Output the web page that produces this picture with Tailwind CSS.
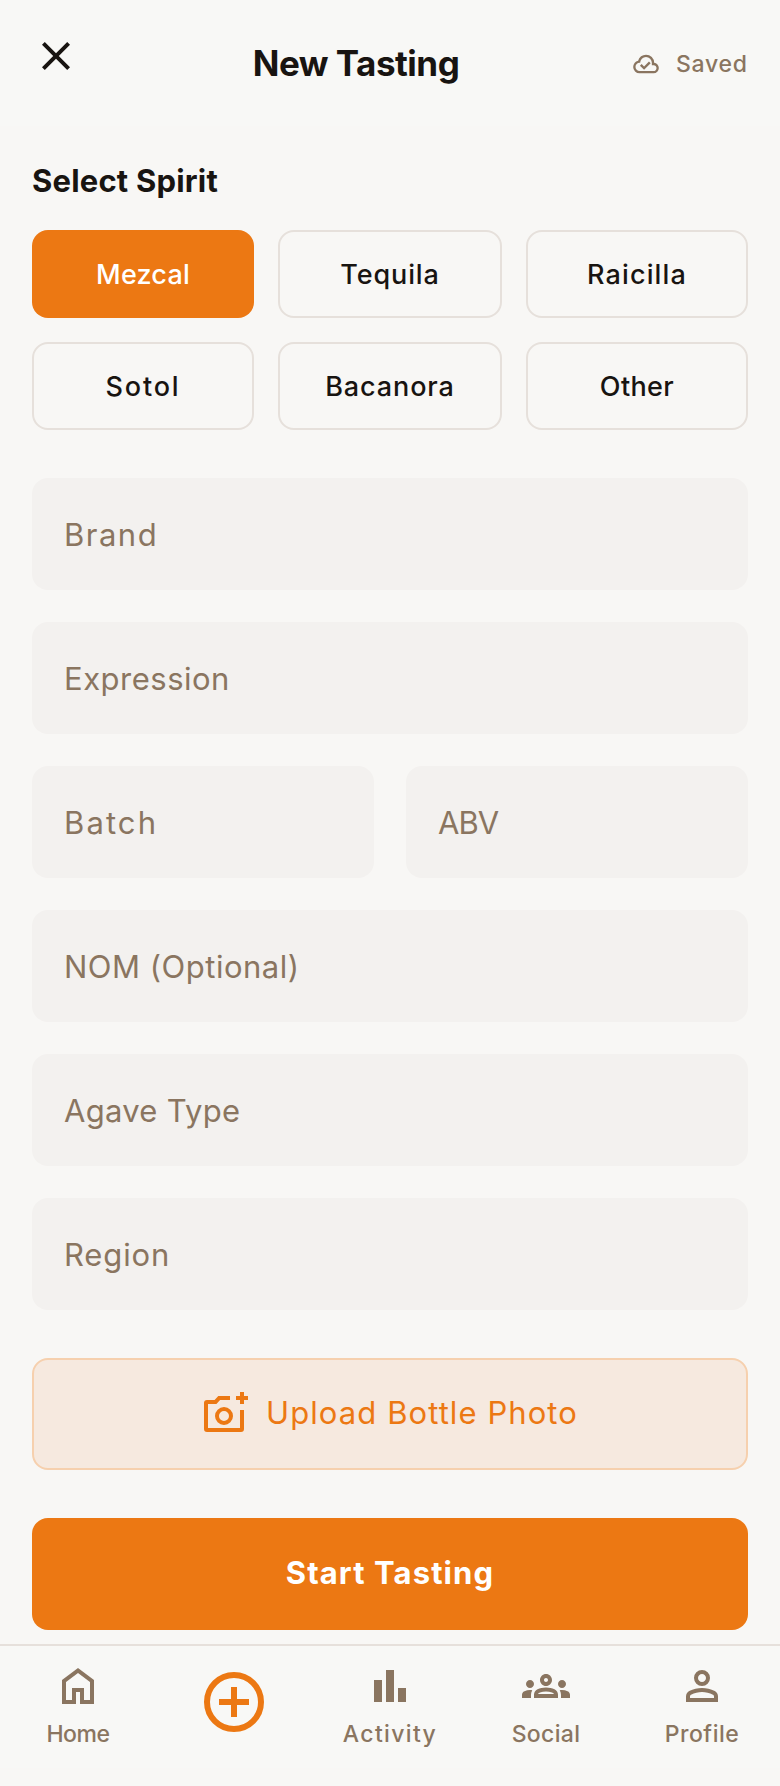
<!DOCTYPE html>
<html lang="en">
<head>
<meta charset="utf-8">
<meta name="viewport" content="width=device-width, initial-scale=1">
<title>New Tasting</title>
<script src="https://cdn.jsdelivr.net/npm/@tailwindcss/browser@4"></script>
</head>
<body class="bg-[#f8f7f5] text-[#181411] font-['Inter','Liberation_Sans',sans-serif]">
<div class="flex h-[1786px] w-[780px] flex-col overflow-hidden">

  <header class="flex h-[126px] shrink-0 items-start bg-[#f8f8f6] px-8 pt-8">
    <button class="size-12 shrink-0" aria-label="Close">
      <svg class="size-12" viewBox="0 0 24 24" fill="currentColor"><path d="M6.4 19 5 17.6l5.6-5.6L5 6.4 6.4 5l5.6 5.6L17.6 5 19 6.4 13.4 12l5.6 5.6-1.4 1.4-5.6-5.6Z"/></svg>
    </button>
    <h1 class="h-16 flex-1 text-center text-[35px] leading-[62px] font-bold tracking-[-0.5px] whitespace-nowrap">New Tasting</h1>
    <div class="flex h-16 w-[116px] shrink-0 items-center gap-4 text-[#8a7560]">
      <svg class="size-7 shrink-0" viewBox="0 0 24 24" fill="currentColor"><path d="m10.35 17 5.65-5.65-1.45-1.45-4.2 4.25-2.1-2.1L6.8 13.45ZM6.5 20q-2.275 0-3.8875-1.575T1 14.575q0-1.95 1.175-3.475T5.25 9.15Q5.875 6.85 7.75 5.425T12 4q2.925 0 4.9625 2.0375T19 11q1.725.2 2.8625 1.4875T23 15.5q0 1.875-1.3125 3.1875T18.5 20Zm0-2h12q1.05 0 1.775-.725T21 15.5t-.725-1.775T18.5 13H17v-2q0-2.075-1.4625-3.5375T12 6 8.4625 7.4625 7 11h-.5q-1.45 0-2.475 1.025T3 14.5t1.025 2.475T6.5 18Z"/></svg>
      <span class="text-[23px] font-medium tracking-[0.75px]">Saved</span>
    </div>
  </header>

  <main class="flex h-[1518px] shrink-0 flex-col px-8 pt-[33px]">
    <h2 class="h-[71px] text-[31px] leading-[44px] font-bold tracking-[0.2px]">Select Spirit</h2>

    <div class="grid grid-cols-[222px_224px_222px] gap-6">
      <button class="h-[88px] rounded-2xl bg-[#ec7813] pt-0.5 text-[27px] font-medium tracking-[0.2px] text-white">Mezcal</button>
      <button class="h-[88px] rounded-2xl border-2 border-[#e6e0db] pt-0.5 text-[27px] font-medium tracking-[0.9px]">Tequila</button>
      <button class="h-[88px] rounded-2xl border-2 border-[#e6e0db] pt-0.5 text-[27px] font-medium tracking-[1.15px]">Raicilla</button>
      <button class="h-[88px] rounded-2xl border-2 border-[#e6e0db] pt-0.5 text-[27px] font-medium tracking-[1.8px]">Sotol</button>
      <button class="h-[88px] rounded-2xl border-2 border-[#e6e0db] pt-0.5 text-[27px] font-medium tracking-[0.9px]">Bacanora</button>
      <button class="h-[88px] rounded-2xl border-2 border-[#e6e0db] pt-0.5 text-[27px] font-medium tracking-[0.37px]">Other</button>
    </div>

    <div class="mt-12 grid grid-cols-2 gap-8 text-[31px] text-[#8a7560]">
      <div class="col-span-2 flex h-28 items-center rounded-2xl bg-[#f3f1ef] px-8 pt-[3px] tracking-[1.5px]">Brand</div>
      <div class="col-span-2 flex h-28 items-center rounded-2xl bg-[#f3f1ef] px-8 pt-[3px] tracking-[0.5px]">Expression</div>
      <div class="flex h-28 items-center rounded-2xl bg-[#f3f1ef] px-8 pt-[3px] tracking-[2.1px]">Batch</div>
      <div class="flex h-28 items-center rounded-2xl bg-[#f3f1ef] px-8 pt-[3px] tracking-[-1px]">ABV</div>
      <div class="col-span-2 flex h-28 items-center rounded-2xl bg-[#f3f1ef] px-8 pt-[3px] tracking-[0.5px]">NOM (Optional)</div>
      <div class="col-span-2 flex h-28 items-center rounded-2xl bg-[#f3f1ef] px-8 pt-[3px] tracking-[0.28px]">Agave Type</div>
      <div class="col-span-2 flex h-28 items-center rounded-2xl bg-[#f3f1ef] px-8 pt-[3px] tracking-[0.85px]">Region</div>
    </div>

    <button class="mt-12 flex h-28 shrink-0 items-center justify-center gap-4 rounded-2xl border-2 border-[#f6d0ae] bg-[#f6e9df] text-[31px] text-[#ec7813]">
      <svg class="size-12" viewBox="0 0 24 24" fill="currentColor"><path d="M14 3v2H9.05L7.2 7H3v12h16V10h2v9.5a1.5 1.5 0 0 1-1.5 1.5h-17A1.5 1.5 0 0 1 1 19.500V6.500A1.500 1.500 0 0 1 2.500 5H6.300L8.150 3ZM19 1h2v2h2v2h-2v2h-2V5h-2V3h2Z"/><circle cx="11" cy="13" r="3.5" fill="none" stroke="currentColor" stroke-width="2"/></svg>
      <span class="pb-0.5 tracking-[1.08px]">Upload Bottle Photo</span>
    </button>

    <button class="mt-12 h-28 shrink-0 rounded-2xl bg-[#ec7813] pb-0.5 text-[31px] font-bold tracking-[1.1px] text-white">Start Tasting</button>
  </main>

  <nav class="grid h-[124px] shrink-0 grid-cols-5 border-t-2 border-[#e6e0db] bg-[#f8f8f6] text-[23px] font-medium text-[#8a7560]">
    <a class="flex flex-col items-center pt-4">
      <svg class="size-12" viewBox="0 0 24 24" fill="currentColor"><path d="M6 19h3v-6h6v6h3v-9l-6-4.500L6 10Zm-2 2V9l8-6 8 6v12h-7v-6h-2v6Z"/></svg>
      <span class="mt-2 leading-8 tracking-[-0.48px]">Home</span>
    </a>
    <a class="flex flex-col items-center pt-5 text-[#ec7813]" aria-label="New tasting">
      <svg class="size-[72px]" viewBox="0 0 24 24" fill="none" stroke="currentColor" stroke-width="2"><circle cx="12" cy="12" r="9"/><path d="M12 7v10M7 12h10"/></svg>
    </a>
    <a class="flex flex-col items-center pt-4">
      <svg class="size-12" viewBox="0 0 24 24" fill="currentColor"><path d="M4 9h4v11H4ZM10 4h4v16h-4ZM16 13h4v7h-4Z"/></svg>
      <span class="mt-2 leading-8 tracking-[1.35px]">Activity</span>
    </a>
    <a class="flex flex-col items-center pt-4">
      <svg class="size-12" viewBox="0 0 24 24" fill="currentColor"><path d="M4 13c1.100 0 2-.9 2-2s-.9-2-2-2-2 .9-2 2 .9 2 2 2zm1.130 1.100C4.760 14.040 4.390 14 4 14c-.99 0-1.930.21-2.780.58C.48 14.900 0 15.620 0 16.430V18h4.500v-1.610c0-.83.23-1.610.63-2.290zM20 13c1.100 0 2-.9 2-2s-.9-2-2-2-2 .9-2 2 .9 2 2 2zm4 3.430c0-.81-.48-1.530-1.220-1.850C21.930 14.210 20.990 14 20 14c-.39 0-.76.040-1.130.1.400.68.630 1.460.630 2.290V18H24v-1.570zM16.240 13.650c-1.170-.52-2.610-.9-4.240-.9s-3.070.39-4.240.9C6.680 14.130 6 15.210 6 16.390V18h12v-1.610c0-1.180-.68-2.260-1.760-2.740zM8.070 16c.09-.23.130-.39.910-.69.970-.38 1.990-.56 3.020-.56s2.050.18 3.020.56c.77.3.810.46.910.69H8.070zM12 8c.55 0 1 .45 1 1s-.45 1-1 1-1-.45-1-1 .45-1 1-1m0-2c-1.660 0-3 1.340-3 3s1.340 3 3 3 3-1.340 3-3-1.340-3-3-3z"/></svg>
      <span class="mt-2 leading-8 tracking-[0.32px]">Social</span>
    </a>
    <a class="flex flex-col items-center pt-4">
      <svg class="size-12" viewBox="0 0 24 24" fill="currentColor"><path d="M12 12q-1.650 0-2.825-1.175T8 8t1.175-2.825T12 4t2.825 1.175T16 8t-1.175 2.825T12 12Zm-8 8v-2.800q0-.85.4375-1.5625T5.600 14.550q1.550-.775 3.150-1.1625T12 13t3.250.3875 3.150 1.1625q.725.375 1.1625 1.0875T20 17.200V20Zm2-2h12v-.8q0-.275-.1375-.5t-.3625-.35q-1.350-.675-2.725-1.0125T12 15t-2.775.3375T6.500 16.350q-.225.125-.3625.350T6 17.200ZM12 10q.825 0 1.4125-.5875T14 8t-.5875-1.4125T12 6t-1.4125.5875T10 8t.5875 1.4125T12 10Z"/></svg>
      <span class="mt-2 leading-8 tracking-[0.5px]">Profile</span>
    </a>
  </nav>
  <div class="h-[18px] shrink-0 bg-[#f8f7f5]"></div>
</div>
</body>
</html>
